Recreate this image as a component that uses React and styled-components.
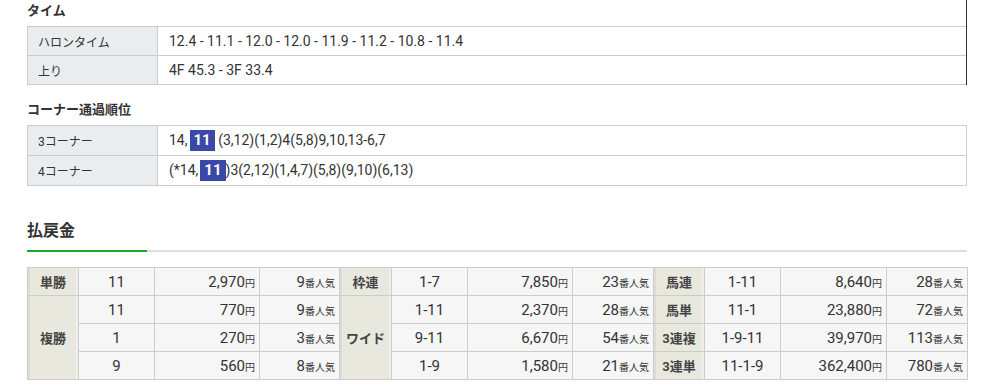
import React from "react";
import styled, { createGlobalStyle } from "styled-components";

const GlobalStyle = createGlobalStyle`
  body {
    margin: 0;
    background: #fff;
    color: #333;
    font-family: Roboto, "Noto Sans CJK JP", sans-serif;
  }
`;

const times = "12.4 - 11.1 - 12.0 - 12.0 - 11.9 - 11.2 - 10.8 - 11.4";

const payout = [
  [
    { label: "単勝", rows: [["11", "2,970", "9"]] },
    { label: "枠連", rows: [["1-7", "7,850", "23"]] },
    { label: "馬連", rows: [["1-11", "8,640", "28"]] },
  ],
  [
    {
      label: "複勝",
      rows: [
        ["11", "770", "9"],
        ["1", "270", "3"],
        ["9", "560", "8"],
      ],
    },
    {
      label: "ワイド",
      rows: [
        ["1-11", "2,370", "28"],
        ["9-11", "6,670", "54"],
        ["1-9", "1,580", "21"],
      ],
    },
  ],
];

const single = [
  { label: "馬単", row: ["11-1", "23,880", "72"] },
  { label: "3連複", row: ["1-9-11", "39,970", "113"] },
  { label: "3連単", row: ["11-1-9", "362,400", "780"] },
];

const colWidths = [51, 76, 105, 80, 52, 76, 105, 81, 51, 76, 106, 81];

export default function App() {
  const [tan, waku, umaren] = payout[0];
  const [fuku, wide] = payout[1];

  const cells = (r, dashed) => [
    <Num key="n" $dashed={dashed}>{r[0]}</Num>,
    <Amount key="a" $dashed={dashed}>
      {r[1]}
      <Unit>円</Unit>
    </Amount>,
    <Amount key="p" $dashed={dashed}>
      {r[2]}
      <Unit>番人気</Unit>
    </Amount>,
  ];

  return (
    <Page>
      <GlobalStyle />
      <TimeSection>
        <Heading>タイム</Heading>
        <InfoTable $noRight>
          <colgroup>
            <col style={{ width: 130 }} />
            <col />
          </colgroup>
          <tbody>
            <InfoRow>
              <InfoLabel>ハロンタイム</InfoLabel>
              <InfoValue>{times}</InfoValue>
            </InfoRow>
            <InfoRow>
              <InfoLabel>上り</InfoLabel>
              <InfoValue>4F 45.3 - 3F 33.4</InfoValue>
            </InfoRow>
          </tbody>
        </InfoTable>
      </TimeSection>

      <Heading $spaced>コーナー通過順位</Heading>
      <InfoTable>
        <colgroup>
          <col style={{ width: 130 }} />
          <col />
        </colgroup>
        <tbody>
          <InfoRow $tall>
            <InfoLabel>3コーナー</InfoLabel>
            <InfoValue>
              14,<Lead>11</Lead> (3,12)(1,2)4(5,8)9,10,13-6,7
            </InfoValue>
          </InfoRow>
          <InfoRow $tall>
            <InfoLabel>4コーナー</InfoLabel>
            <InfoValue>
              (*14,<Lead>11</Lead>)3(2,12)(1,4,7)(5,8)(9,10)(6,13)
            </InfoValue>
          </InfoRow>
        </tbody>
      </InfoTable>

      <PayoutTitle>払戻金</PayoutTitle>
      <TitleRule />

      <PayTable>
        <colgroup>
          {colWidths.map((w, i) => (
            <col key={i} style={{ width: w }} />
          ))}
        </colgroup>
        <tbody>
          <tr>
            <BetLabel>{tan.label}</BetLabel>
            {cells(tan.rows[0])}
            <BetLabel>{waku.label}</BetLabel>
            {cells(waku.rows[0])}
            <BetLabel>{umaren.label}</BetLabel>
            {cells(umaren.rows[0])}
          </tr>
          {[0, 1, 2].map((i) => (
            <tr key={i}>
              {i === 0 && <BetLabel rowSpan={3}>{fuku.label}</BetLabel>}
              {cells(fuku.rows[i], i < 2)}
              {i === 0 && <BetLabel rowSpan={3}>{wide.label}</BetLabel>}
              {cells(wide.rows[i], i < 2)}
              <BetLabel>{single[i].label}</BetLabel>
              {cells(single[i].row)}
            </tr>
          ))}
        </tbody>
      </PayTable>
    </Page>
  );
}

const Page = styled.div`
  width: 940px;
  padding: 0 22px 0 27px;
`;

const TimeSection = styled.section`
  border-right: 1px solid #333;
`;

const Heading = styled.h3`
  margin: ${(p) => (p.$spaced ? "14px" : "0")} 0 4px;
  font-size: 13px;
  line-height: 22px;
  font-weight: bold;
  color: #333;
`;

const InfoTable = styled.table`
  width: 100%;
  table-layout: fixed;
  border-collapse: collapse;
  font-size: 14px;
  border-right: ${(p) => (p.$noRight ? "none" : "1px solid #ccc")};
`;

const InfoRow = styled.tr`
  height: ${(p) => (p.$tall ? "30px" : "29px")};
`;

const InfoLabel = styled.th`
  background: #eaedf0;
  border: 1px solid #ccc;
  padding: 0 10px;
  text-align: left;
  font-weight: normal;
  font-size: 12px;
  color: #333;
`;

const InfoValue = styled.td`
  border: 1px solid #ccc;
  border-right: none;
  padding: 0 11px;
  white-space: nowrap;
  color: #333;
`;

const Lead = styled.span`
  display: inline-block;
  margin-left: 2px;
  padding: 0 4px;
  line-height: 21px;
  background: #3a48a8;
  color: #fff;
  font-weight: bold;
  font-size: 15px;
`;

const PayoutTitle = styled.h2`
  margin: 34px 0 0;
  padding-bottom: 8px;
  font-size: 16px;
  line-height: 22px;
  font-weight: bold;
  color: #333;
`;

const TitleRule = styled.div`
  height: 2px;
  margin-bottom: 15px;
  background: linear-gradient(to right, #17a82e 120px, #dedede 120px);
`;

const PayTable = styled.table`
  width: 940px;
  table-layout: fixed;
  border-collapse: collapse;
  font-size: 15px;
  color: #333;

  tr {
    height: 28px;
  }
`;

const BetLabel = styled.th`
  background: #e8e8de;
  border: 1px solid #ccc;
  box-shadow: inset 2px 0 0 #dcdcd6, inset -2px 0 0 #efefe9;
  font-size: 13px;
  font-weight: bold;
  color: #444;
  text-align: center;
  padding: 0;
`;

const Cell = styled.td`
  background: #f6f6f6;
  border: 1px solid #ccc;
  border-bottom: ${(p) => (p.$dashed ? "1px dashed #ccc" : "1px solid #ccc")};
  padding: 0 4px;
  white-space: nowrap;
`;

const Num = styled(Cell)`
  text-align: center;
`;

const Amount = styled(Cell)`
  text-align: right;
`;

const Unit = styled.span`
  font-size: 10px;
`;
